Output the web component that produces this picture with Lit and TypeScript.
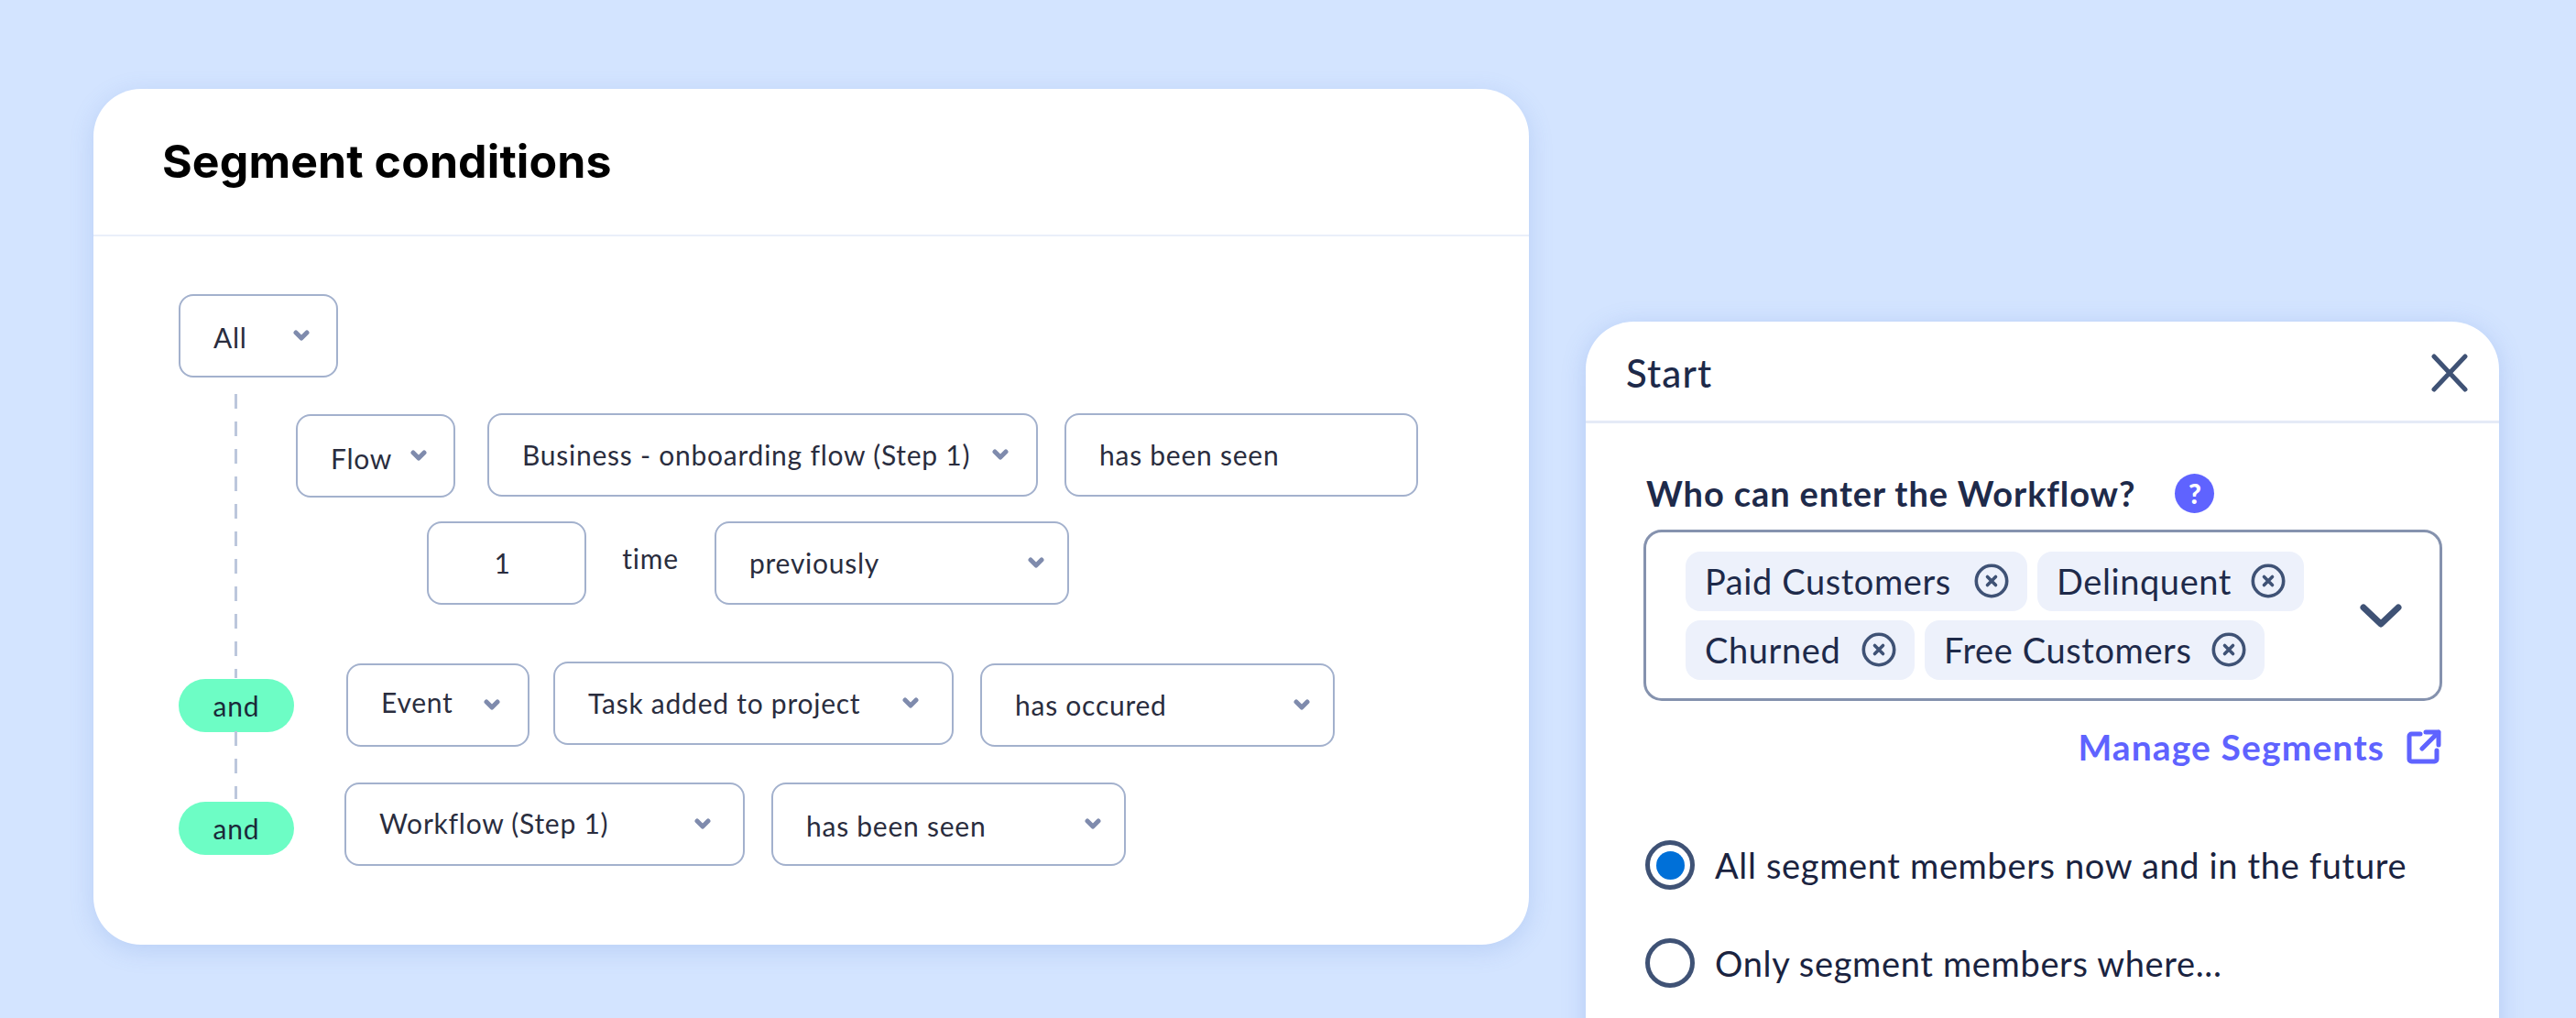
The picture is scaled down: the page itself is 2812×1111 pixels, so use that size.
import { LitElement, html, css } from "lit";
import { customElement } from "lit/decorators.js";

type Sel = { t: string; w: number; chev?: boolean; cls?: string; pr?: number };
type Chip = { t: string; w: number };

const chev = html`<svg class="chev" viewBox="0 0 18 13"><path d="M3 3l6 6 6-6" fill="none" stroke="#7f8bad" stroke-width="5" stroke-linecap="round" stroke-linejoin="round"/></svg>`;

const xIcon = html`<svg class="x" viewBox="0 0 38 38"><circle cx="19" cy="19" r="16.7" fill="none" stroke="#3f5275" stroke-width="3.6"/><path d="M14.5 14.5l9 9M23.5 14.5l-9 9" stroke="#3f5275" stroke-width="3.6" stroke-linecap="round"/></svg>`;

const sel = (s: Sel) => html`<div class="sel ${s.cls ?? ""}" style="width:${s.w}px;padding-right:${s.pr ?? 29}px">
  <span class="t">${s.t}</span>${s.chev === false ? "" : chev}
</div>`;

const chip = (c: Chip) => html`<div class="chip" style="width:${c.w}px">${c.t}${xIcon}</div>`;

@customElement("app-root")
export class AppRoot extends LitElement {
  static styles = css`
    :host { display: block; width: 2812px; height: 1111px; overflow: hidden; background: #d3e4ff; font-family: "Lato", "Open Sans", sans-serif; }
    .stage { display: flex; align-items: flex-start; padding: 97px 0 0 102px; height: 1111px; box-sizing: border-box; }
    .card { position: relative; width: 1567px; height: 934px; flex: none; background: #fff; border-radius: 52px; box-shadow: 0 6px 26px rgba(96, 135, 215, .22); box-sizing: border-box; }
    .head { height: 157px; border-bottom: 2px solid #eaeffa; display: flex; align-items: center; padding: 0 0 2px 75px; box-sizing: content-box; }
    h1 { margin: 0; font: 700 50px "Inter", sans-serif; letter-spacing: .1px; color: #000; }
    .body { padding: 63px 0 0 93px; }
    .row { display: flex; align-items: flex-start; }
    .r1 { margin-top: 39px; padding-left: 128px; }
    .r1 .s1 { margin-left: 35px; }
    .r1 .s2 { margin-left: 29px; }
    .r2 { margin-top: 26px; padding-left: 271px; }
    .r3 { margin-top: 62px; }
    .r4 { margin-top: 39px; }
    .sel { height: 91px; flex: none; box-sizing: border-box; border: 2px solid #a3b1cd; border-radius: 16px; background: #fff; display: flex; align-items: center; justify-content: space-between; padding: 0 29px 0 36px; color: #2a2d3e; font-size: 30px; }
    .t { position: relative; top: -1px; white-space: nowrap; letter-spacing: .75px; }
    .chev { width: 18px; height: 13px; flex: none; }
    .down { margin-top: 1px; }
    .down .t { top: 2px; }
    .first .t { top: 1px; }
    .num { justify-content: center; padding-left: 0; }
    .time { width: 140px; flex: none; text-align: center; font-size: 30px; letter-spacing: .75px; color: #2a2d3e; padding-top: 22px; }
    .pill { width: 126px; height: 58px; flex: none; border-radius: 29px; background: #6dfdc5; display: flex; align-items: center; justify-content: center; font-size: 30px; letter-spacing: .9px; color: #1b2a3a; margin-top: 19px; }
    .r4 .pill { margin-top: 21px; }
    .r3 .s0 { margin-left: 57px; margin-top: 2px; }
    .r3 .s0 .t { top: -4px; }
    .r3 .s1 { margin-left: 26px; }
    .r3 .s2 { margin-left: 29px; margin-top: 2px; }
    .r4 .s0 { margin-left: 55px; }
    .r4 .s0 .t { top: -2px; }
    .r4 .s1 { margin-left: 29px; }
    .r4 .s1 .t { top: 1px; }
    .dash { position: absolute; left: 154px; width: 3px; background: repeating-linear-gradient(#bcc7dc 0 16px, transparent 16px 30px); }
    .d1 { top: 333px; height: 310px; }
    .d2 { top: 701px; height: 74px; }

    .panel { width: 997px; height: 900px; flex: none; margin: 254px 0 0 62px; background: #fff; border-radius: 52px 52px 0 0; box-shadow: 0 4px 26px rgba(96, 135, 215, .26); }
    .phead { border-bottom: 3px solid #e5eaf7; display: flex; align-items: center; justify-content: space-between; padding: 4px 33px 0 44px; box-sizing: border-box; height: 111px; }
    .phead span { font-size: 42px; color: #1e2a4a; letter-spacing: 1.1px; font-weight: 500; }
    .close { width: 42px; height: 42px; }
    .pbody { padding: 49px 63px 0 63px; }
    .label { display: flex; align-items: center; gap: 43px; height: 54px; padding-left: 3px; font-size: 38px; font-weight: 700; letter-spacing: .9px; color: #1e2a4a; }
    .help { width: 43px; height: 43px; border-radius: 50%; background: #5f63ff; color: #fff; font-size: 30px; font-weight: 900; display: flex; align-items: center; justify-content: center; letter-spacing: 0; }
    .box { margin-top: 13px; height: 187px; box-sizing: border-box; border: 3px solid #8592ae; border-radius: 20px; display: flex; align-items: center; justify-content: space-between; padding: 0 41px 0 43px; margin-right: -1px; }
    .chips { display: flex; flex-direction: column; gap: 10px; }
    .chipline { display: flex; gap: 11px; }
    .chip { height: 65px; box-sizing: border-box; border-radius: 16px; background: #edf1fb; display: flex; align-items: center; justify-content: space-between; padding: 0 20px 0 21px; font-size: 38px; color: #1e2a4a; letter-spacing: .6px; white-space: nowrap; }
    .chip .x { width: 38px; height: 38px; flex: none; }
    .bigchev { width: 46px; height: 28px; }
    .manage { display: flex; justify-content: flex-end; align-items: center; gap: 24px; height: 60px; margin-top: 20px; font-size: 39px; font-weight: 700; color: #5f63ff; letter-spacing: 1.1px; }
    .manage svg { width: 38px; height: 38px; }
    .radio { display: flex; align-items: center; gap: 22px; font-size: 38px; color: #1a2340; letter-spacing: .65px; height: 54px; padding-left: 2px; }
    .r-a { margin-top: 72px; }
    .r-b { margin-top: 53px; }
    .dot { width: 54px; height: 54px; flex: none; box-sizing: border-box; border: 5px solid #3f5275; border-radius: 50%; display: flex; align-items: center; justify-content: center; }
    .dot i { display: block; width: 31px; height: 31px; border-radius: 50%; background: #0070d8; }
  `;

  render() {
    const r1: Sel[] = [
      { t: "Flow", w: 174, cls: "down s0" },
      { t: "Business - onboarding flow (Step 1)", w: 601, cls: "s1", pr: 30 },
      { t: "has been seen", w: 386, chev: false, cls: "s2" },
    ];
    const r3: Sel[] = [
      { t: "Event", w: 200, cls: "s0", pr: 30 },
      { t: "Task added to project", w: 437, cls: "s1", pr: 36 },
      { t: "has occured", w: 387, cls: "s2", pr: 25 },
    ];
    const r4: Sel[] = [
      { t: "Workflow (Step 1)", w: 437, cls: "s0", pr: 35 },
      { t: "has been seen", w: 387, cls: "s1", pr: 25 },
    ];
    const chipRows: Chip[][] = [
      [{ t: "Paid Customers", w: 373 }, { t: "Delinquent", w: 291 }],
      [{ t: "Churned", w: 250 }, { t: "Free Customers", w: 371 }],
    ];
    return html`<div class="stage">
      <section class="card">
        <div class="head"><h1>Segment conditions</h1></div>
        <div class="dash d1"></div>
        <div class="dash d2"></div>
        <div class="body">
          <div class="row">${sel({ t: "All", w: 174, cls: "first" })}</div>
          <div class="row r1">${r1.map(sel)}</div>
          <div class="row r2">
            ${sel({ t: "1", w: 174, chev: false, cls: "num", pr: 9 })}
            <div class="time">time</div>
            ${sel({ t: "previously", w: 387, pr: 25 })}
          </div>
          <div class="row r3"><div class="pill">and</div>${r3.map(sel)}</div>
          <div class="row r4"><div class="pill">and</div>${r4.map(sel)}</div>
        </div>
      </section>
      <section class="panel">
        <div class="phead"><span>Start</span>
          <svg class="close" viewBox="0 0 42 42"><path d="M4 3l34 36M38 3L4 39" fill="none" stroke="#3f5275" stroke-width="5" stroke-linecap="round"/></svg>
        </div>
        <div class="pbody">
          <div class="label">Who can enter the Workflow?<span class="help">?</span></div>
          <div class="box">
            <div class="chips">
              ${chipRows.map((row) => html`<div class="chipline">${row.map(chip)}</div>`)}
            </div>
            <svg class="bigchev" viewBox="0 0 46 28"><path d="M4 5l19 18L42 5" fill="none" stroke="#3f5275" stroke-width="7" stroke-linecap="round" stroke-linejoin="round"/></svg>
          </div>
          <div class="manage">Manage Segments
            <svg viewBox="0 0 38 38"><path d="M15 5H5.500A2.500 2.500 0 0 0 3 7.500v25A2.500 2.500 0 0 0 5.500 35h25a2.500 2.500 0 0 0 2.500-2.500V23M21 3h14v14M35 3L17 21" fill="none" stroke="#5f63ff" stroke-width="5" stroke-linecap="round" stroke-linejoin="round"/></svg>
          </div>
          <div class="radio r-a"><span class="dot"><i></i></span>All segment members now and in the future</div>
          <div class="radio r-b"><span class="dot"></span>Only segment members where...</div>
        </div>
      </section>
    </div>`;
  }
}
